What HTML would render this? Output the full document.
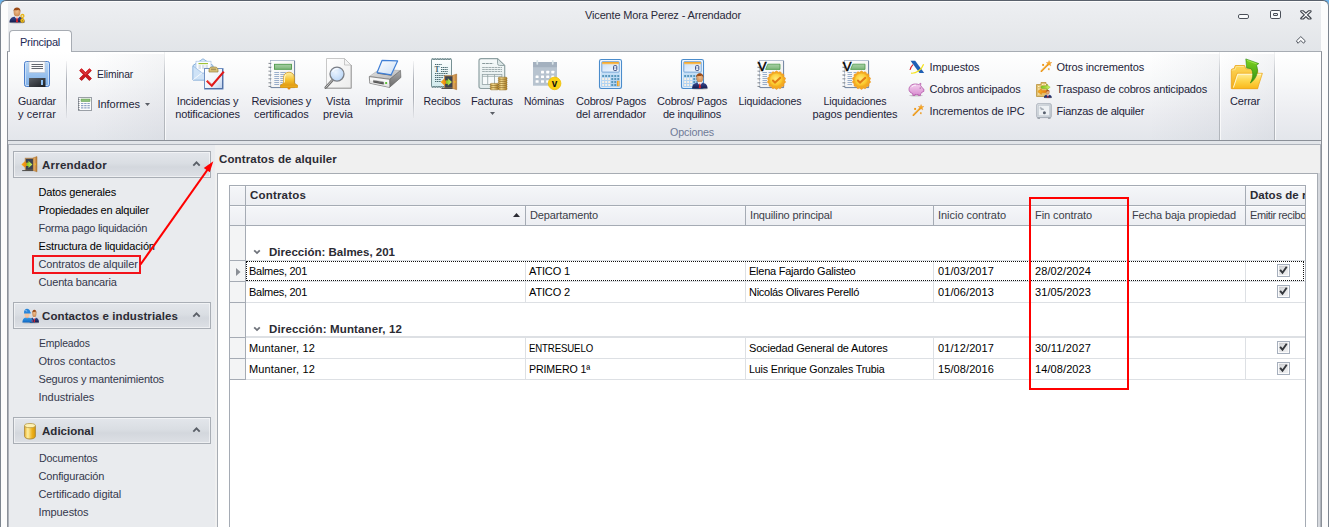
<!DOCTYPE html>
<html lang="es"><head><meta charset="utf-8"><title>Vicente Mora Perez - Arrendador</title>
<style>
html,body{margin:0;padding:0;background:#fff;}
body{width:1329px;height:527px;overflow:hidden;position:relative;font-family:"Liberation Sans", sans-serif;font-size:11px;}
#w{position:absolute;left:0;top:0;width:1329px;height:527px;overflow:hidden;background:#e9ebee;}
#w div,#w span,#w svg{box-sizing:border-box;}
svg{position:absolute;overflow:visible;}
</style></head><body><div id="w">
<div style="position:absolute;left:0px;top:0px;width:8px;height:8px;background:#6db3ea;"></div>
<div style="position:absolute;left:1321px;top:0px;width:8px;height:8px;background:#6db3ea;"></div>
<div style="position:absolute;left:0px;top:0px;width:1329px;height:560px;border:1px solid #7d858f;border-top-color:#59616c;border-radius:6px 6px 0 0;background:#fcfcfc;"></div>
<div style="position:absolute;left:8px;top:2px;width:1313px;height:49px;background:linear-gradient(#edeff2,#e8eaed 50%,#e2e5e9);"></div>
<div style="position:absolute;left:8px;top:51px;width:1313px;height:500px;background:#e9ebee;"></div>
<div style="position:absolute;left:7px;top:51px;width:1315px;height:500px;border-left:1px solid #8b9098;border-right:1px solid #8b9098;background:#e2e5e9;"></div>
<div style="position:absolute;left:7px;top:51px;width:1315px;height:90px;border:1px solid #8b9098;border-top-color:#a7acb3;background:linear-gradient(#ffffff 0%,#f8f9fa 30%,#ecedf1 70%,#e3e6eb 100%);"></div>
<div style="position:absolute;left:9px;top:30px;width:63px;height:22px;border:1px solid #a7acb3;border-bottom:none;border-radius:4px 4px 0 0;background:#ffffff;"></div>
<div style="position:absolute;left:94px;top:54px;width:70px;height:86px;background:linear-gradient(to right,rgba(120,130,150,0),rgba(120,130,150,0.075));"></div>
<div style="position:absolute;left:1149px;top:54px;width:70px;height:86px;background:linear-gradient(to right,rgba(120,130,150,0),rgba(120,130,150,0.075));"></div>
<div style="position:absolute;left:1221px;top:54px;width:53px;height:86px;background:linear-gradient(to right,rgba(120,130,150,0),rgba(120,130,150,0.075));"></div>
<div style="position:absolute;left:164px;top:52px;width:1px;height:88px;background:linear-gradient(rgba(190,194,200,0.2),#b9bdc3 30%,#b1b5bb);"></div>
<div style="position:absolute;left:165px;top:52px;width:1px;height:88px;background:rgba(255,255,255,0.7);"></div>
<div style="position:absolute;left:1219px;top:52px;width:1px;height:88px;background:linear-gradient(rgba(190,194,200,0.2),#b9bdc3 30%,#b1b5bb);"></div>
<div style="position:absolute;left:1220px;top:52px;width:1px;height:88px;background:rgba(255,255,255,0.7);"></div>
<div style="position:absolute;left:1274px;top:52px;width:1px;height:88px;background:linear-gradient(rgba(190,194,200,0.2),#b9bdc3 30%,#b1b5bb);"></div>
<div style="position:absolute;left:1275px;top:52px;width:1px;height:88px;background:rgba(255,255,255,0.7);"></div>
<div style="position:absolute;left:66px;top:61px;width:1px;height:57px;background:linear-gradient(rgba(170,174,182,0.1),#a9adb5 35%,#a9adb5 65%,rgba(170,174,182,0.1));"></div>
<div style="position:absolute;left:67px;top:61px;width:1px;height:57px;background:linear-gradient(rgba(255,255,255,0),rgba(255,255,255,0.8) 50%,rgba(255,255,255,0));"></div>
<div style="position:absolute;left:413px;top:61px;width:1px;height:57px;background:linear-gradient(rgba(170,174,182,0.1),#a9adb5 35%,#a9adb5 65%,rgba(170,174,182,0.1));"></div>
<div style="position:absolute;left:414px;top:61px;width:1px;height:57px;background:linear-gradient(rgba(255,255,255,0),rgba(255,255,255,0.8) 50%,rgba(255,255,255,0));"></div>
<div style="position:absolute;left:8px;top:144px;width:1313px;height:400px;border:1px solid #adb2ba;background:#e9ebee;"></div>
<div style="position:absolute;left:215px;top:145px;width:1105px;height:400px;background:#f0f0f0;"></div>
<div style="position:absolute;left:1318px;top:173px;width:2px;height:400px;background:#d6d9de;"></div>
<div style="position:absolute;left:217px;top:173px;width:1101px;height:400px;border:1px solid #a7acb3;background:#ffffff;"></div>
<div style="position:absolute;left:13px;top:151px;width:198px;height:27px;border:1px solid #a9aeb5;background:linear-gradient(#e3e6eb 0%,#dadee3 45%,#d3d7dd 60%,#dde0e5 100%);box-shadow:inset 0 0 0 1px rgba(255,255,255,0.5);"></div>
<svg style="left:192px;top:160px" width="9" height="7" viewBox="0 0 9 7"><path d="M1.300 5.600 L4.500 2.400 L7.700 5.600" fill="none" stroke="#5a5f67" stroke-width="1.900"/></svg>
<div style="position:absolute;left:13px;top:302px;width:198px;height:27px;border:1px solid #a9aeb5;background:linear-gradient(#e3e6eb 0%,#dadee3 45%,#d3d7dd 60%,#dde0e5 100%);box-shadow:inset 0 0 0 1px rgba(255,255,255,0.5);"></div>
<svg style="left:192px;top:311px" width="9" height="7" viewBox="0 0 9 7"><path d="M1.300 5.600 L4.500 2.400 L7.700 5.600" fill="none" stroke="#5a5f67" stroke-width="1.900"/></svg>
<div style="position:absolute;left:13px;top:417px;width:198px;height:27px;border:1px solid #a9aeb5;background:linear-gradient(#e3e6eb 0%,#dadee3 45%,#d3d7dd 60%,#dde0e5 100%);box-shadow:inset 0 0 0 1px rgba(255,255,255,0.5);"></div>
<svg style="left:192px;top:426px" width="9" height="7" viewBox="0 0 9 7"><path d="M1.300 5.600 L4.500 2.400 L7.700 5.600" fill="none" stroke="#5a5f67" stroke-width="1.900"/></svg>
<div style="position:absolute;left:229px;top:185px;width:1077px;height:400px;border:1px solid #a5abb4;border-bottom:none;background:#fff;"></div>
<div style="position:absolute;left:230px;top:186px;width:1075px;height:19px;background:linear-gradient(#f5f6f9,#eceef2);box-shadow:inset 0 1px 0 rgba(255,255,255,0.7);"></div>
<div style="position:absolute;left:230px;top:206px;width:1075px;height:19px;background:linear-gradient(#f5f6f9,#eceef2);box-shadow:inset 0 1px 0 rgba(255,255,255,0.7);"></div>
<div style="position:absolute;left:230px;top:205px;width:1075px;height:1px;background:#a5abb4;"></div>
<div style="position:absolute;left:230px;top:225px;width:1075px;height:1px;background:#a5abb4;"></div>
<div style="position:absolute;left:230px;top:226px;width:15px;height:400px;background:#f3f4f5;"></div>
<div style="position:absolute;left:245px;top:186px;width:1px;height:400px;background:#a5abb4;"></div>
<div style="position:absolute;left:1245px;top:186px;width:1px;height:40px;background:#a5abb4;"></div>
<div style="position:absolute;left:525px;top:206px;width:1px;height:20px;background:#a5abb4;"></div>
<div style="position:absolute;left:745px;top:206px;width:1px;height:20px;background:#a5abb4;"></div>
<div style="position:absolute;left:933px;top:206px;width:1px;height:20px;background:#a5abb4;"></div>
<div style="position:absolute;left:1030px;top:206px;width:1px;height:20px;background:#a5abb4;"></div>
<div style="position:absolute;left:1127px;top:206px;width:1px;height:20px;background:#a5abb4;"></div>
<svg style="left:513px;top:213px" width="7" height="4" viewBox="0 0 7 4"><path d="M0 4 L3.5 0 L7 4Z" fill="#2b2b33"/></svg>
<div style="position:absolute;left:246px;top:260px;width:1059px;height:1px;background:#dde0e4;"></div>
<div style="position:absolute;left:230px;top:260px;width:15px;height:1px;background:#a5abb4;"></div>
<svg style="left:253px;top:249px" width="8" height="6" viewBox="0 0 8 6"><path d="M1.200 1.300 L4 4.100 L6.800 1.300" fill="none" stroke="#6e727a" stroke-width="1.800"/></svg>
<div style="position:absolute;left:246px;top:281px;width:1059px;height:1px;background:#dde0e4;"></div>
<div style="position:absolute;left:230px;top:281px;width:15px;height:1px;background:#a5abb4;"></div>
<div style="position:absolute;left:525px;top:261px;width:1px;height:20px;background:#dde0e4;"></div>
<div style="position:absolute;left:745px;top:261px;width:1px;height:20px;background:#dde0e4;"></div>
<div style="position:absolute;left:933px;top:261px;width:1px;height:20px;background:#dde0e4;"></div>
<div style="position:absolute;left:1030px;top:261px;width:1px;height:20px;background:#dde0e4;"></div>
<div style="position:absolute;left:1127px;top:261px;width:1px;height:20px;background:#dde0e4;"></div>
<div style="position:absolute;left:1245px;top:261px;width:1px;height:20px;background:#dde0e4;"></div>
<svg style="left:1277px;top:264px" width="13" height="13" viewBox="0 0 13 13"><rect x="0.500" y="0.500" width="12" height="12" fill="#fbfbfc" stroke="#a6afbc"/><rect x="2" y="2" width="9" height="9" fill="url(#gChk)"/><path d="M2.200 2.200H10.800" stroke="#c3c5c9" stroke-width="0.600"/><path d="M3.100 5.800 L5.500 8.700 L9.700 2.700" fill="none" stroke="#34373c" stroke-width="1.900"/></svg>
<div style="position:absolute;left:246px;top:261px;width:1058px;height:20px;border:1px dotted #111;"></div>
<svg style="left:236px;top:268px" width="5" height="8" viewBox="0 0 5 8"><path d="M0 0 L4.500 4 L0 8Z" fill="#8a8e95"/></svg>
<div style="position:absolute;left:246px;top:302px;width:1059px;height:1px;background:#dde0e4;"></div>
<div style="position:absolute;left:230px;top:302px;width:15px;height:1px;background:#a5abb4;"></div>
<div style="position:absolute;left:525px;top:282px;width:1px;height:20px;background:#dde0e4;"></div>
<div style="position:absolute;left:745px;top:282px;width:1px;height:20px;background:#dde0e4;"></div>
<div style="position:absolute;left:933px;top:282px;width:1px;height:20px;background:#dde0e4;"></div>
<div style="position:absolute;left:1030px;top:282px;width:1px;height:20px;background:#dde0e4;"></div>
<div style="position:absolute;left:1127px;top:282px;width:1px;height:20px;background:#dde0e4;"></div>
<div style="position:absolute;left:1245px;top:282px;width:1px;height:20px;background:#dde0e4;"></div>
<svg style="left:1277px;top:285px" width="13" height="13" viewBox="0 0 13 13"><rect x="0.500" y="0.500" width="12" height="12" fill="#fbfbfc" stroke="#a6afbc"/><rect x="2" y="2" width="9" height="9" fill="url(#gChk)"/><path d="M2.200 2.200H10.800" stroke="#c3c5c9" stroke-width="0.600"/><path d="M3.100 5.800 L5.500 8.700 L9.700 2.700" fill="none" stroke="#34373c" stroke-width="1.900"/></svg>
<div style="position:absolute;left:246px;top:336px;width:1059px;height:2px;background:#dde0e4;"></div>
<div style="position:absolute;left:230px;top:337px;width:15px;height:1px;background:#a5abb4;"></div>
<svg style="left:253px;top:326px" width="8" height="6" viewBox="0 0 8 6"><path d="M1.200 1.300 L4 4.100 L6.800 1.300" fill="none" stroke="#6e727a" stroke-width="1.800"/></svg>
<div style="position:absolute;left:246px;top:358px;width:1059px;height:1px;background:#dde0e4;"></div>
<div style="position:absolute;left:230px;top:358px;width:15px;height:1px;background:#a5abb4;"></div>
<div style="position:absolute;left:525px;top:338px;width:1px;height:20px;background:#dde0e4;"></div>
<div style="position:absolute;left:745px;top:338px;width:1px;height:20px;background:#dde0e4;"></div>
<div style="position:absolute;left:933px;top:338px;width:1px;height:20px;background:#dde0e4;"></div>
<div style="position:absolute;left:1030px;top:338px;width:1px;height:20px;background:#dde0e4;"></div>
<div style="position:absolute;left:1127px;top:338px;width:1px;height:20px;background:#dde0e4;"></div>
<div style="position:absolute;left:1245px;top:338px;width:1px;height:20px;background:#dde0e4;"></div>
<svg style="left:1277px;top:341px" width="13" height="13" viewBox="0 0 13 13"><rect x="0.500" y="0.500" width="12" height="12" fill="#fbfbfc" stroke="#a6afbc"/><rect x="2" y="2" width="9" height="9" fill="url(#gChk)"/><path d="M2.200 2.200H10.800" stroke="#c3c5c9" stroke-width="0.600"/><path d="M3.100 5.800 L5.500 8.700 L9.700 2.700" fill="none" stroke="#34373c" stroke-width="1.900"/></svg>
<div style="position:absolute;left:246px;top:379px;width:1059px;height:1px;background:#dde0e4;"></div>
<div style="position:absolute;left:230px;top:379px;width:15px;height:1px;background:#a5abb4;"></div>
<div style="position:absolute;left:525px;top:359px;width:1px;height:20px;background:#dde0e4;"></div>
<div style="position:absolute;left:745px;top:359px;width:1px;height:20px;background:#dde0e4;"></div>
<div style="position:absolute;left:933px;top:359px;width:1px;height:20px;background:#dde0e4;"></div>
<div style="position:absolute;left:1030px;top:359px;width:1px;height:20px;background:#dde0e4;"></div>
<div style="position:absolute;left:1127px;top:359px;width:1px;height:20px;background:#dde0e4;"></div>
<div style="position:absolute;left:1245px;top:359px;width:1px;height:20px;background:#dde0e4;"></div>
<svg style="left:1277px;top:362px" width="13" height="13" viewBox="0 0 13 13"><rect x="0.500" y="0.500" width="12" height="12" fill="#fbfbfc" stroke="#a6afbc"/><rect x="2" y="2" width="9" height="9" fill="url(#gChk)"/><path d="M2.200 2.200H10.800" stroke="#c3c5c9" stroke-width="0.600"/><path d="M3.100 5.800 L5.500 8.700 L9.700 2.700" fill="none" stroke="#34373c" stroke-width="1.900"/></svg>
<div style="position:absolute;left:230px;top:380px;width:16px;height:200px;background:#fff;"></div>
<svg style="left:0;top:0" width="0" height="0"><defs>
<linearGradient id="gFl" x1="0" y1="0" x2="0" y2="1"><stop offset="0" stop-color="#b9d7f5"/><stop offset="1" stop-color="#7eaee6"/></linearGradient>
<linearGradient id="gDk" x1="0" y1="0" x2="1" y2="1"><stop offset="0" stop-color="#5a5f66"/><stop offset="1" stop-color="#1c1e22"/></linearGradient>
<linearGradient id="gEnv" x1="0" y1="0" x2="0" y2="1"><stop offset="0" stop-color="#e3f0fb"/><stop offset="1" stop-color="#a9cdee"/></linearGradient>
<linearGradient id="gClip" x1="0" y1="0" x2="1" y2="1"><stop offset="0" stop-color="#ffffff"/><stop offset="0.6" stop-color="#eef3fb"/><stop offset="1" stop-color="#b9cdea"/></linearGradient>
<linearGradient id="gGold" x1="0" y1="0" x2="0" y2="1"><stop offset="0" stop-color="#fdf0a8"/><stop offset="0.5" stop-color="#f6c332"/><stop offset="1" stop-color="#d98e08"/></linearGradient>
<linearGradient id="gGoldH" x1="0" y1="0" x2="1" y2="0"><stop offset="0" stop-color="#f0b830"/><stop offset="0.3" stop-color="#fdeea0"/><stop offset="0.7" stop-color="#eeb01a"/><stop offset="1" stop-color="#d89a0c"/></linearGradient>
<linearGradient id="gGreen" x1="0" y1="0" x2="0" y2="1"><stop offset="0" stop-color="#a7cfa4"/><stop offset="1" stop-color="#7db77a"/></linearGradient>
<linearGradient id="gPage" x1="0" y1="0" x2="1" y2="1"><stop offset="0" stop-color="#ffffff"/><stop offset="1" stop-color="#ececec"/></linearGradient>
<radialGradient id="gLens" cx="0.4" cy="0.35" r="0.7"><stop offset="0" stop-color="#eaf3fe"/><stop offset="1" stop-color="#b7d4f6"/></radialGradient>
<linearGradient id="gPaper" x1="0" y1="0" x2="1" y2="1"><stop offset="0" stop-color="#ffffff"/><stop offset="1" stop-color="#c8ddf5"/></linearGradient>
<linearGradient id="gPrTop" x1="0" y1="0" x2="1" y2="1"><stop offset="0" stop-color="#e4e4e4"/><stop offset="1" stop-color="#b4b4b4"/></linearGradient>
<linearGradient id="gPrSide" x1="0" y1="0" x2="0" y2="1"><stop offset="0" stop-color="#a8a8a8"/><stop offset="1" stop-color="#6a6a6a"/></linearGradient>
<linearGradient id="gRcpt" x1="0" y1="0" x2="0" y2="1"><stop offset="0" stop-color="#ffffff"/><stop offset="1" stop-color="#cfe9ec"/></linearGradient>
<linearGradient id="gDoor" x1="0" y1="0" x2="1" y2="0"><stop offset="0" stop-color="#e9b877"/><stop offset="1" stop-color="#b9772c"/></linearGradient>
<linearGradient id="gArrO" x1="0" y1="0" x2="1" y2="0"><stop offset="0" stop-color="#f7b21c"/><stop offset="1" stop-color="#e8740c"/></linearGradient>
<linearGradient id="gArrG" x1="0" y1="0" x2="1" y2="0"><stop offset="0" stop-color="#7cc41c"/><stop offset="1" stop-color="#d3f06a"/></linearGradient>
<linearGradient id="gFac" x1="0" y1="0" x2="0" y2="1"><stop offset="0" stop-color="#f6fafa"/><stop offset="1" stop-color="#dfeaea"/></linearGradient>
<linearGradient id="gCoin" x1="0" y1="0" x2="1" y2="0"><stop offset="0" stop-color="#b8872a"/><stop offset="0.35" stop-color="#f3dc93"/><stop offset="1" stop-color="#a9781e"/></linearGradient>
<linearGradient id="gCalc" x1="0" y1="0" x2="0" y2="1"><stop offset="0" stop-color="#e3effb"/><stop offset="1" stop-color="#a5cdf0"/></linearGradient>
<linearGradient id="gDisp" x1="0" y1="0" x2="1" y2="1"><stop offset="0" stop-color="#c9def6"/><stop offset="1" stop-color="#f6faff"/></linearGradient>
<linearGradient id="gOr" x1="0" y1="0" x2="1" y2="0"><stop offset="0" stop-color="#f39a12"/><stop offset="1" stop-color="#fbd27c"/></linearGradient>
<radialGradient id="gSeal" cx="0.45" cy="0.4" r="0.6"><stop offset="0" stop-color="#ffe978"/><stop offset="0.7" stop-color="#fbc92e"/><stop offset="1" stop-color="#f1a21a"/></radialGradient>
<radialGradient id="gFace" cx="0.5" cy="0.4" r="0.6"><stop offset="0" stop-color="#f0bd8c"/><stop offset="1" stop-color="#c98850"/></radialGradient>
<linearGradient id="gSuit" x1="0" y1="0" x2="0" y2="1"><stop offset="0" stop-color="#3a4d96"/><stop offset="1" stop-color="#141c4c"/></linearGradient>
<linearGradient id="gFold" x1="0" y1="0" x2="0" y2="1"><stop offset="0" stop-color="#ffef9c"/><stop offset="0.5" stop-color="#fdd448"/><stop offset="1" stop-color="#f9b81c"/></linearGradient>
<linearGradient id="gFoldB" x1="0" y1="0" x2="0" y2="1"><stop offset="0" stop-color="#fdd85c"/><stop offset="1" stop-color="#f3ac18"/></linearGradient>
<linearGradient id="gGrn2" x1="0" y1="0" x2="0" y2="1"><stop offset="0" stop-color="#7ed321"/><stop offset="1" stop-color="#2f8f12"/></linearGradient>
<linearGradient id="gRedX" x1="0" y1="0" x2="0" y2="1"><stop offset="0" stop-color="#e0343a"/><stop offset="1" stop-color="#a80d12"/></linearGradient>
<linearGradient id="gPig" x1="0" y1="0" x2="0" y2="1"><stop offset="0" stop-color="#f6d3f0"/><stop offset="1" stop-color="#d88cd0"/></linearGradient>
<linearGradient id="gSafe" x1="0" y1="0" x2="1" y2="1"><stop offset="0" stop-color="#eef1f4"/><stop offset="1" stop-color="#c3cad2"/></linearGradient>
<linearGradient id="gBlueS" x1="0" y1="0" x2="0" y2="1"><stop offset="0" stop-color="#3aa0ea"/><stop offset="1" stop-color="#0e64c0"/></linearGradient>
<linearGradient id="gChk" x1="0" y1="0" x2="1" y2="1"><stop offset="0" stop-color="#d3d5d8"/><stop offset="1" stop-color="#f1f1f2"/></linearGradient>
</defs></svg>
<svg style="left:9px;top:7px" width="16" height="16" viewBox="0 0 16 16"><ellipse cx="8" cy="15.600" rx="7.600" ry="1" fill="#000" fill-opacity="0.180"/><path d="M0.500 15.400c0-3.600 2-5 4.600-5.600L8 9.400l2.900.4c2.600.6 4.600 2 4.600 5.600Z" fill="url(#gSuit)"/><path d="M5.600 9.600L8 12.800 10.400 9.600 8 8.800Z" fill="#ffffff"/><path d="M7.500 10.600h1l.6 4.600H6.900Z" fill="#d81e28"/><ellipse cx="8" cy="5.400" rx="3.300" ry="4" fill="url(#gFace)"/><path d="M4.500 5.200C4.200 2 6 0.600 8 0.600s3.800 1.400 3.500 4.600c-.4-1.600-1.200-2.200-1.800-2.400-1 .6-2.600.6-3.800.2-.8.400-1.200 1.200-1.400 2.200Z" fill="#9a4a16"/><circle cx="13.400" cy="9" r="1.500" fill="none" stroke="#e8b418" stroke-width="1.300"/><path d="M13.400 10.400V12.600" stroke="#e8b418" stroke-width="1.200"/><ellipse cx="13.400" cy="13.600" rx="1.900" ry="2.100" fill="#f2c21c" stroke="#c8900c" stroke-width="0.500"/><circle cx="13.400" cy="13.800" r="0.600" fill="#8a6a1a"/></svg>
<svg style="left:21px;top:58px" width="32" height="32" viewBox="0 0 32 32"><rect x="3.5" y="3.5" width="25" height="25" rx="2" fill="url(#gFl)" stroke="#4d7fcb"/><rect x="4.5" y="4.5" width="23" height="23" rx="1.2" fill="none" stroke="#d4e6fa" stroke-opacity="0.8"/><rect x="8" y="3.5" width="16" height="11" fill="#fafafa" stroke="#b9c4d2" stroke-width="0.6"/><rect x="8" y="3" width="16" height="1" fill="#8f98a5"/><path d="M10.5 6.5H22M10.5 8.5H22M10.5 10.5H22" stroke="#4f545c" stroke-width="0.9"/><rect x="8" y="20" width="16.5" height="9" fill="url(#gDk)"/><rect x="20" y="22" width="2" height="5" fill="#8fc0f2"/></svg>
<svg style="left:77.7px;top:66.5px" width="15" height="15" viewBox="0 0 16 16"><path d="M3 13.6L13 3.6M3 3.6L13 13.6" stroke="#7a7a7a" stroke-opacity="0.25" stroke-width="3.6"/><path d="M2.6 2.6L13.4 13.4M13.4 2.6L2.6 13.4" stroke="url(#gRedX)" stroke-width="3.4"/><path d="M2.6 2.6L13.4 13.4M13.4 2.6L2.6 13.4" stroke="#c81a20" stroke-width="3.2"/><path d="M3 2.8L8 7.6 13 2.8" stroke="#e8484c" stroke-width="1.2" fill="none" stroke-opacity="0.7"/></svg>
<svg style="left:77px;top:96px" width="16" height="16" viewBox="0 0 16 16"><rect x="1.5" y="1.5" width="13" height="13" fill="#fcfcfc" stroke="#9a9fa6"/><path d="M1 3.5h1.6M1 5.5h1.6M1 7.5h1.6M1 9.5h1.6M1 11.5h1.6M1 13.5h1.6" stroke="#6f747c" stroke-width="0.8"/><rect x="4" y="3" width="9" height="2.6" fill="#8dc07a" stroke="#5f9a4c" stroke-width="0.5"/><path d="M4 7.5h2.4M7.2 7.5h2.4M10.4 7.5h2.4M4 9.7h2.4M7.2 9.7h2.4M10.4 9.7h2.4M4 11.9h2.4M7.2 11.9h2.4M10.4 11.9h2.4" stroke="#8fa3c4" stroke-width="1.2"/></svg>
<svg style="left:145px;top:103px" width="5" height="3" viewBox="0 0 5 3"><path d="M0 0H5L2.500 3Z" fill="#5a5e66"/></svg>
<svg style="left:192px;top:58px" width="32" height="32" viewBox="0 0 32 32"><path d="M1 7.5L11 0.8 21 7.5V22H1Z" fill="url(#gEnv)" stroke="#7fa9d6" stroke-width="0.9"/><rect x="4" y="3.2" width="15" height="12" fill="#fbfdff" stroke="#9dbde0" stroke-width="0.6"/><path d="M6.5 5.6H16" stroke="#9bbf2e" stroke-width="1.1"/><path d="M6.5 8h2.4M10 8h2.4M13.5 8h2.4M6.5 10h2.4M10 10h2.4M13.5 10h2.4" stroke="#b9c6d6" stroke-width="1"/><path d="M1 8L11 15.5 21 8V22H1Z" fill="#cfe3f7" stroke="#8fb5de" stroke-width="0.7"/><path d="M1.3 21.7L10 14.8" stroke="#ffffff" stroke-width="0.9" stroke-opacity="0.9"/><rect x="12.5" y="10.5" width="18.5" height="20.5" fill="url(#gClip)" stroke="#6f8fc2" stroke-width="1"/><path d="M30.6 11V30.6H13" stroke="#4a6aa0" stroke-width="1" fill="none"/><path d="M17 14V12c0-1.8 1.4-3 3-3h3c1.6 0 3 1.2 3 3v2Z" fill="#d9c27a" stroke="#9a8444" stroke-width="0.7"/><rect x="19" y="10.6" width="5" height="1.6" fill="#a8935a"/><path d="M14.8 22.8L19.8 27.6 31.8 13.6" fill="none" stroke="#e01818" stroke-width="2.2"/><path d="M15 22.4L19.6 26.4" fill="none" stroke="#f26a5a" stroke-width="0.9"/></svg>
<svg style="left:265px;top:58px" width="34" height="32" viewBox="0 0 34 32"><rect x="5.500" y="2.500" width="24" height="27" fill="url(#gPage)" stroke="#a3b2c8" stroke-width="0.800"/><path d="M29.600 3V29.600H6" stroke="#6c7f9c" stroke-width="0.900" fill="none"/><path d="M3.500 5.200h2.800M3.500 9.100h2.800M3.500 13h2.800M3.500 16.900h2.800M3.500 20.800h2.800M3.500 24.700h2.800M3.500 28.200h2.800" stroke="#6a7078" stroke-width="1.100"/><path d="M3.300 4.300h2.400M3.300 8.200h2.400M3.300 12.100h2.400M3.300 16h2.400M3.300 19.900h2.400M3.300 23.800h2.400M3.300 27.300h2.400" stroke="#ffffff" stroke-width="0.800"/><rect x="9.5" y="6.3" width="17" height="5" fill="url(#gGreen)" stroke="#4f9a4c" stroke-width="0.9"/><path d="M9.3 14.5h4.8M9.3 16.5h4.8M9.3 18.5h4.8M9.3 20.5h4.8M9.3 22.5h4.8M9.3 24.5h4.8M9.3 26.5h4.8M15.3 14.5h5.5M15.3 16.5h4M15.3 18.5h3.5M15.3 20.5h3.5M15.3 22.5h3M15.3 24.5h2.5M15.3 26.5h2" stroke="#8fa6c6" stroke-width="0.9"/><path d="M24 14.2c-3.2 0-5.4 2.4-5.4 5.6v4.6c0 1.2-1.6 2-3 2.6v2.4h16.8v-2.4c-1.4-.6-3-1.400-3-2.600v-4.600c0-3.200-2.200-5.600-5.400-5.600Z" fill="url(#gGold)" stroke="#c98a10" stroke-width="0.7"/><path d="M15.600 27.400h16.800v2h-16.800Z" fill="#e9a81a"/><path d="M21 16.500c-1.200.8-1.600 2.400-1.600 4v4" stroke="#fff7c8" stroke-width="1.200" fill="none" stroke-opacity="0.9"/><ellipse cx="24" cy="30.500" rx="1.500" ry="1.100" fill="#e88a10"/></svg>
<svg style="left:322px;top:58px" width="32" height="32" viewBox="0 0 32 32"><path d="M4.500 0.500H22.500L29 7V30H4.500Z" fill="url(#gPage)" stroke="#c2c2c2" stroke-width="0.9"/><path d="M29.300 7V30.300H5" stroke="#9a9a9a" stroke-width="0.9" fill="none"/><path d="M22.500 0.500V7H29Z" fill="#f4f4f4" stroke="#bdbdbd" stroke-width="0.8"/><path d="M10.300 22.300L3.700 29.700" stroke="#6f6f6f" stroke-width="2.600" stroke-linecap="round"/><path d="M10.300 22.100L3.900 29.300" stroke="#c9c9c9" stroke-width="1" stroke-linecap="round"/><circle cx="15" cy="16.100" r="7" fill="url(#gLens)" stroke="#7b7f86" stroke-width="1.300"/><path d="M10.500 14c1-2.400 3.600-3.600 6-3.200" stroke="#ffffff" stroke-width="1.200" fill="none" stroke-opacity="0.8"/></svg>
<svg style="left:368px;top:58px" width="34" height="32" viewBox="0 0 34 32"><path d="M1.400 18.400L11.600 11.300 32.400 12.500 21.700 21.200Z" fill="url(#gPrTop)" stroke="#9c9c9c" stroke-width="0.500" stroke-linejoin="round"/><path d="M21.700 21.300L32.500 12.500 32.900 19.500 21.500 29.400Z" fill="url(#gPrSide)" stroke="#5c5c5c" stroke-width="0.600" stroke-linejoin="round"/><path d="M1.300 18.600L21.700 21.300 21.500 29.400 1.700 25.200Z" fill="#f8f8f8" stroke="#5e5e5e" stroke-width="0.700" stroke-linejoin="round"/><path d="M1.600 22.600L21.600 25.800V29.300L1.700 25.100Z" fill="#dcdcdc" fill-opacity="0.600"/><path d="M9.500 15L23.500 17.100" stroke="#6a6a6a" stroke-width="1.300"/><path d="M14.100 2.300L29.600 2.900 23.200 16.800 9.100 14.600Z" fill="url(#gPaper)" stroke="#3f7fd6" stroke-width="1.200" stroke-linejoin="round"/><path d="M5.300 22.200L15.700 23.900 15.700 26.500 5.300 24.500Z" fill="#444"/><path d="M5.300 22.200L15.700 23.900" stroke="#a8a8a8" stroke-width="0.600"/><path d="M6.200 23.600L15 25.100" stroke="#888" stroke-width="0.600"/><rect x="17.200" y="24" width="1.900" height="2" fill="#5fc43a"/></svg>
<svg style="left:425px;top:58px" width="34" height="32" viewBox="0 0 34 32"><path d="M6.500 2L7.33 0.3L8.17 2L9.00 0.3L9.83 2L10.67 0.3L11.50 2L12.33 0.3L13.17 2L14.00 0.3L14.83 2L15.67 0.3L16.50 2L17.33 0.3L18.17 2L19.00 0.3L19.83 2L20.67 0.3L21.50 2L22.33 0.3L23.17 2L24.00 0.3L24.83 2L25.67 0.3L26.50 2V28.100L25.67 29.700L24.83 28L24.00 29.700L23.17 28L22.33 29.700L21.50 28L20.67 29.700L19.83 28L19.00 29.700L18.17 28L17.33 29.700L16.50 28L15.67 29.700L14.83 28L14.00 29.700L13.17 28L12.33 29.700L11.50 28L10.67 29.700L9.83 28L9.00 29.700L8.17 28L7.33 29.700L6.50 28Z" fill="url(#gRcpt)" stroke="#557578" stroke-width="0.800"/><path d="M10 6.500H17" stroke="#4a6a70" stroke-width="1" stroke-dasharray="1.300 0.500"/><path d="M16 9.500H23M16 11.500H23M16 13.500H23M10 15.500H23M10 17.500H20M10 19.500H18M10 21.500H16M10 23.500H16" stroke="#4a6a70" stroke-width="1" stroke-dasharray="1.300 0.500"/><text x="9.400" y="13.800" font-family="Liberation Serif, serif" font-size="7.500" font-weight="700" fill="#3f6068">T</text><g transform="translate(15.2,15.4) scale(1.03)"><rect x="4.300" y="2.300" width="8.200" height="12" fill="#3b4250" stroke="#b98a52" stroke-width="1"/><path d="M12.300 1.800L16 0.600V15.800L12.300 14.600Z" fill="url(#gDoor)" stroke="#a8702c" stroke-width="0.5"/><rect x="13.700" y="7.400" width="1" height="1.800" fill="#f7c21a"/><path d="M1.200 14.600H12" stroke="#4a4a4a" stroke-width="1"/><path d="M0.400 8.400L4.400 4.800V6.800H7V10H4.400V12Z" fill="url(#gArrO)"/><path d="M11.400 8.400L7.400 4.800V6.800H5.600V10H7.400V12Z" fill="url(#gArrG)"/></g></svg>
<svg style="left:476px;top:58px" width="32" height="32" viewBox="0 0 32 32"><path d="M5 0.700H21.500L28.700 7.500V28.500a2 2 0 0 1-2 2H5a2 2 0 0 1-2-2V2.700a2 2 0 0 1 2-2Z" fill="url(#gFac)" stroke="#8ea0a2" stroke-width="1.200"/><path d="M21.500 0.700V5.500a2 2 0 0 0 2 2H28.700Z" fill="#dbe6e6" stroke="#8ea0a2" stroke-width="0.9"/><path d="M6.200 5.500H17.200" stroke="#8a9a9c" stroke-width="1" stroke-dasharray="3 0.600"/><path d="M6.200 9.500H26M6.200 11.500H26M6.200 13.500H26" stroke="#97a6a8" stroke-width="0.9" stroke-dasharray="2.600 0.500"/><rect x="6.300" y="16.400" width="19.600" height="10" fill="#f7fbfb" stroke="#93a3a5" stroke-width="0.8"/><path d="M6.300 18.300H25.900M11.700 16.400V26.400M18.500 16.400V26.400" stroke="#93a3a5" stroke-width="0.8"/><rect x="22.3" y="19.2" width="8.8" height="2.200" rx="1.100" fill="url(#gCoin)" stroke="#8a6414" stroke-width="0.500"/><rect x="22.3" y="21.3" width="8.8" height="2.200" rx="1.100" fill="url(#gCoin)" stroke="#8a6414" stroke-width="0.500"/><rect x="22.3" y="23.4" width="8.8" height="2.200" rx="1.100" fill="url(#gCoin)" stroke="#8a6414" stroke-width="0.500"/><rect x="22.3" y="25.5" width="8.8" height="2.200" rx="1.100" fill="url(#gCoin)" stroke="#8a6414" stroke-width="0.500"/><rect x="22.3" y="27.6" width="8.8" height="2.200" rx="1.100" fill="url(#gCoin)" stroke="#8a6414" stroke-width="0.500"/><rect x="22.3" y="29.7" width="8.8" height="2.200" rx="1.100" fill="url(#gCoin)" stroke="#8a6414" stroke-width="0.500"/><rect x="14.2" y="25.4" width="8.2" height="2.200" rx="1.100" fill="url(#gCoin)" stroke="#8a6414" stroke-width="0.500"/><rect x="14.2" y="27.5" width="8.2" height="2.200" rx="1.100" fill="url(#gCoin)" stroke="#8a6414" stroke-width="0.500"/><rect x="14.2" y="29.6" width="8.2" height="2.200" rx="1.100" fill="url(#gCoin)" stroke="#8a6414" stroke-width="0.500"/></svg>
<svg style="left:490px;top:112px" width="5" height="3" viewBox="0 0 5 3"><path d="M0 0H5L2.500 3Z" fill="#5a5e66"/></svg>
<svg style="left:528px;top:58px" width="34" height="34" viewBox="0 0 34 34"><rect x="5" y="4" width="24" height="23.700" fill="#b7c3cf"/><rect x="5" y="4" width="24" height="5.200" fill="#a4b1bf"/><rect x="8.400" y="2" width="1.700" height="4.800" rx="0.800" fill="#dbe6ea"/><rect x="23.900" y="2" width="1.700" height="4.800" rx="0.800" fill="#dbe6ea"/><rect x="13" y="12.8" width="3" height="2.600" rx="0.400" fill="#ffffff"/><rect x="18.2" y="12.8" width="3" height="2.600" rx="0.400" fill="#ffffff"/><rect x="23.3" y="12.8" width="3" height="2.600" rx="0.400" fill="#ffffff"/><rect x="7.6" y="17.5" width="3" height="2.600" rx="0.400" fill="#ffffff"/><rect x="13" y="17.5" width="3" height="2.600" rx="0.400" fill="#ffffff"/><rect x="18.2" y="17.5" width="3" height="2.600" rx="0.400" fill="#ffffff"/><rect x="23.3" y="17.5" width="3" height="2.600" rx="0.400" fill="#ffffff"/><rect x="7.6" y="22.2" width="3" height="2.600" rx="0.400" fill="#ffffff"/><rect x="13" y="22.2" width="3" height="2.600" rx="0.400" fill="#ffffff"/><rect x="18.2" y="22.2" width="3" height="2.600" rx="0.400" fill="#ffffff"/><circle cx="26.600" cy="25.400" r="6.300" fill="#f9cf14" stroke="#ecbf0a" stroke-width="0.8"/><text x="26.600" y="29.200" text-anchor="middle" font-family="Liberation Sans, sans-serif" font-size="10" font-weight="700" fill="#111">v</text></svg>
<svg style="left:594px;top:58px" width="34" height="32" viewBox="0 0 34 32"><rect x="5.500" y="1.500" width="22" height="29" rx="1.800" fill="url(#gCalc)" stroke="#4a8ccc" stroke-width="1.100"/><rect x="6.600" y="2.600" width="19.800" height="26.800" rx="1.200" fill="none" stroke="#f2f8fe" stroke-width="0.800"/><rect x="7.800" y="3.700" width="17.400" height="10.400" rx="0.800" fill="url(#gDisp)" stroke="#5f96cf" stroke-width="0.800"/><rect x="8.200" y="4.100" width="16.600" height="2" fill="#f6a21e"/><rect x="8.200" y="5.300" width="16.600" height="0.800" fill="#fbc566"/><rect x="19.600" y="7.600" width="3.200" height="4.900" rx="0.900" fill="none" stroke="#3c4d80" stroke-width="1"/><path d="M19.900 10H22.500" stroke="#3c4d80" stroke-width="0.500" stroke-opacity="0.600"/><rect x="8.2" y="17.1" width="1.900" height="1.800" fill="#4d8fb5"/><rect x="11.2" y="17.1" width="1.900" height="1.800" fill="#4d8fb5"/><rect x="14.2" y="17.1" width="1.900" height="1.800" fill="#4d8fb5"/><rect x="17.3" y="17.1" width="1.900" height="1.800" fill="#4d8fb5"/><rect x="20.3" y="17.1" width="1.900" height="1.800" fill="#4d8fb5"/><rect x="23.3" y="17.1" width="1.900" height="1.800" fill="#4d8fb5"/><rect x="8.2" y="20.1" width="1.900" height="1.800" fill="#fff3e4"/><rect x="11.2" y="20.1" width="1.900" height="1.800" fill="#fff3e4"/><rect x="14.2" y="20.1" width="1.900" height="1.800" fill="#fff3e4"/><rect x="17.3" y="20.1" width="1.900" height="1.800" fill="#4d8fb5"/><rect x="20.3" y="20.1" width="1.900" height="1.800" fill="#4d8fb5"/><rect x="23.3" y="20.1" width="1.900" height="1.800" fill="#4d8fb5"/><rect x="8.2" y="23.1" width="1.900" height="1.800" fill="#fff3e4"/><rect x="11.2" y="23.1" width="1.900" height="1.800" fill="#fff3e4"/><rect x="14.2" y="23.1" width="1.900" height="1.800" fill="#fff3e4"/><rect x="17.3" y="23.1" width="1.900" height="1.800" fill="#4d8fb5"/><rect x="20.3" y="23.1" width="1.900" height="1.800" fill="#4d8fb5"/><rect x="8.2" y="26.1" width="1.900" height="1.800" fill="#fff3e4"/><rect x="11.2" y="26.1" width="1.900" height="1.800" fill="#fff3e4"/><rect x="14.2" y="26.1" width="1.900" height="1.800" fill="#fff3e4"/><rect x="17.3" y="26.1" width="1.900" height="1.800" fill="#4d8fb5"/><rect x="20.3" y="26.1" width="1.900" height="1.800" fill="#4d8fb5"/><rect x="23.100" y="23" width="2.100" height="5" fill="url(#gOr)" stroke="#e08a10" stroke-width="0.300"/></svg>
<svg style="left:676px;top:58px" width="34" height="32" viewBox="0 0 34 32"><rect x="5.500" y="1.500" width="22" height="29" rx="1.800" fill="url(#gCalc)" stroke="#4a8ccc" stroke-width="1.100"/><rect x="6.600" y="2.600" width="19.800" height="26.800" rx="1.200" fill="none" stroke="#f2f8fe" stroke-width="0.800"/><rect x="7.800" y="3.700" width="17.400" height="10.400" rx="0.800" fill="url(#gDisp)" stroke="#5f96cf" stroke-width="0.800"/><rect x="8.200" y="4.100" width="16.600" height="2" fill="#f6a21e"/><rect x="8.200" y="5.300" width="16.600" height="0.800" fill="#fbc566"/><rect x="19.600" y="7.600" width="3.200" height="4.900" rx="0.900" fill="none" stroke="#3c4d80" stroke-width="1"/><path d="M19.900 10H22.500" stroke="#3c4d80" stroke-width="0.500" stroke-opacity="0.600"/><rect x="8.2" y="17.1" width="1.900" height="1.800" fill="#4d8fb5"/><rect x="11.2" y="17.1" width="1.900" height="1.800" fill="#4d8fb5"/><rect x="14.2" y="17.1" width="1.900" height="1.800" fill="#4d8fb5"/><rect x="17.3" y="17.1" width="1.900" height="1.800" fill="#4d8fb5"/><rect x="20.3" y="17.1" width="1.900" height="1.800" fill="#4d8fb5"/><rect x="23.3" y="17.1" width="1.900" height="1.800" fill="#4d8fb5"/><rect x="8.2" y="20.1" width="1.900" height="1.800" fill="#fff3e4"/><rect x="11.2" y="20.1" width="1.900" height="1.800" fill="#fff3e4"/><rect x="14.2" y="20.1" width="1.900" height="1.800" fill="#fff3e4"/><rect x="17.3" y="20.1" width="1.900" height="1.800" fill="#4d8fb5"/><rect x="20.3" y="20.1" width="1.900" height="1.800" fill="#4d8fb5"/><rect x="23.3" y="20.1" width="1.900" height="1.800" fill="#4d8fb5"/><rect x="8.2" y="23.1" width="1.900" height="1.800" fill="#fff3e4"/><rect x="11.2" y="23.1" width="1.900" height="1.800" fill="#fff3e4"/><rect x="14.2" y="23.1" width="1.900" height="1.800" fill="#fff3e4"/><rect x="17.3" y="23.1" width="1.900" height="1.800" fill="#4d8fb5"/><rect x="20.3" y="23.1" width="1.900" height="1.800" fill="#4d8fb5"/><rect x="8.2" y="26.1" width="1.900" height="1.800" fill="#fff3e4"/><rect x="11.2" y="26.1" width="1.900" height="1.800" fill="#fff3e4"/><rect x="14.2" y="26.1" width="1.900" height="1.800" fill="#fff3e4"/><rect x="17.3" y="26.1" width="1.900" height="1.800" fill="#4d8fb5"/><rect x="20.3" y="26.1" width="1.900" height="1.800" fill="#4d8fb5"/><rect x="23.100" y="23" width="2.100" height="5" fill="url(#gOr)" stroke="#e08a10" stroke-width="0.300"/><g transform="translate(15.6,14.6) scale(1.03)"><ellipse cx="8" cy="15.600" rx="7.600" ry="1" fill="#000" fill-opacity="0.180"/><path d="M0.500 15.400c0-3.600 2-5 4.600-5.600L8 9.400l2.900.4c2.600.6 4.600 2 4.600 5.600Z" fill="url(#gSuit)"/><path d="M5.600 9.600L8 12.800 10.400 9.600 8 8.800Z" fill="#ffffff"/><path d="M7.500 10.600h1l.6 4.600H6.900Z" fill="#d81e28"/><ellipse cx="8" cy="5.400" rx="3.300" ry="4" fill="url(#gFace)"/><path d="M4.500 5.200C4.200 2 6 0.600 8 0.600s3.800 1.400 3.500 4.600c-.4-1.600-1.200-2.200-1.800-2.400-1 .6-2.600.6-3.800.2-.8.400-1.200 1.200-1.400 2.200Z" fill="#9a4a16"/></g></svg>
<svg style="left:754px;top:58px" width="34" height="33" viewBox="0 0 34 33"><rect x="5.500" y="2.500" width="24" height="27" fill="url(#gPage)" stroke="#a3b2c8" stroke-width="0.800"/><path d="M29.600 3V29.600H6" stroke="#6c7f9c" stroke-width="0.900" fill="none"/><path d="M3.500 5.200h2.800M3.500 9.100h2.800M3.500 13h2.800M3.500 16.900h2.800M3.500 20.800h2.800M3.500 24.700h2.800M3.500 28.200h2.800" stroke="#6a7078" stroke-width="1.100"/><path d="M3.300 4.300h2.400M3.300 8.200h2.400M3.300 12.100h2.400M3.300 16h2.400M3.300 19.900h2.400M3.300 23.800h2.400M3.300 27.300h2.400" stroke="#ffffff" stroke-width="0.800"/><path d="M11.600 11.400L13.800 6.200H26V11.400Z" fill="url(#gGreen)" stroke="#4f9a4c" stroke-width="0.8"/><path d="M8.5 14.5h4.5M8.5 16.5h4.5M8.5 18.5h4.5M8.5 20.5h4.5M8.5 22.5h4.5M8.5 24.5h4.5M8.5 26.5h4.5M14.5 14.5h3" stroke="#8fa6c6" stroke-width="0.9"/><text x="3.800" y="13.400" font-family="Liberation Sans, sans-serif" font-size="13.200" font-weight="400" fill="#000" stroke="#000" stroke-width="0.450">V</text><path d="M30.58 22.20Q32.95 24.58 29.78 25.71Q30.88 28.88 27.54 28.52Q27.15 31.85 24.30 30.08Q22.50 32.92 20.70 30.08Q17.85 31.85 17.46 28.52Q14.12 28.88 15.22 25.71Q12.05 24.58 14.42 22.20Q12.05 19.82 15.22 18.69Q14.12 15.52 17.46 15.88Q17.85 12.55 20.70 14.32Q22.50 11.48 24.30 14.32Q27.15 12.55 27.54 15.88Q30.88 15.52 29.78 18.69Q32.95 19.82 30.58 22.20Z" fill="#f5a623" stroke="#e8921a" stroke-width="0.500"/><circle cx="22.5" cy="22.2" r="6.96" fill="url(#gSeal)" stroke="#f0b428" stroke-width="0.600"/><path d="M18.90 22.50L20.90 24.70L26.30 19.80" fill="none" stroke="#e27a12" stroke-width="1.900" stroke-linecap="round" stroke-linejoin="round"/></svg>
<svg style="left:839px;top:58px" width="34" height="33" viewBox="0 0 34 33"><rect x="5.500" y="2.500" width="24" height="27" fill="url(#gPage)" stroke="#a3b2c8" stroke-width="0.800"/><path d="M29.600 3V29.600H6" stroke="#6c7f9c" stroke-width="0.900" fill="none"/><path d="M3.500 5.200h2.800M3.500 9.100h2.800M3.500 13h2.800M3.500 16.900h2.800M3.500 20.800h2.800M3.500 24.700h2.800M3.500 28.200h2.800" stroke="#6a7078" stroke-width="1.100"/><path d="M3.300 4.300h2.400M3.300 8.200h2.400M3.300 12.100h2.400M3.300 16h2.400M3.300 19.900h2.400M3.300 23.800h2.400M3.300 27.300h2.400" stroke="#ffffff" stroke-width="0.800"/><path d="M11.600 11.400L13.800 6.200H26V11.400Z" fill="url(#gGreen)" stroke="#4f9a4c" stroke-width="0.8"/><path d="M8.5 14.5h4.5M8.5 16.5h4.5M8.5 18.5h4.5M8.5 20.5h4.5M8.5 22.5h4.5M8.5 24.5h4.5M8.5 26.5h4.5M14.5 14.5h3" stroke="#8fa6c6" stroke-width="0.9"/><text x="3.800" y="13.400" font-family="Liberation Sans, sans-serif" font-size="13.200" font-weight="400" fill="#000" stroke="#000" stroke-width="0.450">V</text><path d="M30.58 22.20Q32.95 24.58 29.78 25.71Q30.88 28.88 27.54 28.52Q27.15 31.85 24.30 30.08Q22.50 32.92 20.70 30.08Q17.85 31.85 17.46 28.52Q14.12 28.88 15.22 25.71Q12.05 24.58 14.42 22.20Q12.05 19.82 15.22 18.69Q14.12 15.52 17.46 15.88Q17.85 12.55 20.70 14.32Q22.50 11.48 24.30 14.32Q27.15 12.55 27.54 15.88Q30.88 15.52 29.78 18.69Q32.95 19.82 30.58 22.20Z" fill="#f5a623" stroke="#e8921a" stroke-width="0.500"/><circle cx="22.5" cy="22.2" r="6.96" fill="url(#gSeal)" stroke="#f0b428" stroke-width="0.600"/><path d="M18.90 22.50L20.90 24.70L26.30 19.80" fill="none" stroke="#e27a12" stroke-width="1.900" stroke-linecap="round" stroke-linejoin="round"/></svg>
<svg style="left:909px;top:60px" width="16" height="16" viewBox="0 0 16 16"><path d="M1.500 0.800H6.200L15.200 13H10.500Z" fill="#1f5fb4"/><path d="M1 10C1.500 7.800 2.600 5.900 4 4.600" stroke="#d8202a" stroke-width="1.100" fill="none"/><path d="M2 13.200C7 13.800 12.500 10 14.600 4.200" stroke="#f5e21a" stroke-width="1.200" fill="none"/></svg>
<svg style="left:908px;top:81px" width="17" height="16" viewBox="0 0 17 16"><ellipse cx="8" cy="14.600" rx="7" ry="0.900" fill="#000" fill-opacity="0.180"/><path d="M1 8.500C1 5 4 3 7.500 3c1.200 0 2.300.2 3.200.6L12.800 2.200 12.600 4.800c1 .8 1.700 1.700 2 2.600l1.200.6v2.400l-1.400.5c-.5.900-1.200 1.600-2 2.100V14.400H10.200V13.400c-1 .2-2.200.2-3.200 0v1H4.800V12.600C2.400 11.800 1 10.400 1 8.500Z" fill="url(#gPig)" stroke="#b357a8" stroke-width="0.800"/><path d="M3.600 6.200c1-1.400 2.600-2 4.200-2" stroke="#ffffff" stroke-width="1" fill="none" stroke-opacity="0.800"/><circle cx="12.200" cy="7" r="0.600" fill="#7a2a72"/></svg>
<svg style="left:912px;top:104px" width="12.5" height="12.5" viewBox="0 0 16 16"><path d="M1.800 14.200L10.600 5.400" stroke="#e8921a" stroke-width="2.300" stroke-linecap="round"/><path d="M2 13.600L10.200 5.400" stroke="#fbc64a" stroke-width="0.800" stroke-linecap="round"/><path d="M11.600 0.600l.9 2.500 2.700.1-2.100 1.700.7 2.600-2.200-1.500-2.200 1.500.7-2.600-2.100-1.700 2.700-.1Z" fill="#f7a81c" stroke="#e07a10" stroke-width="0.400"/><path d="M3 5.200l2 2M5 5.200l-2 2M10.400 11l1.800 1.800M12.200 11l-1.800 1.800" stroke="#ee9a1c" stroke-width="1.300"/></svg>
<svg style="left:1039.5px;top:60px" width="12.5" height="12.5" viewBox="0 0 16 16"><path d="M1.800 14.200L10.600 5.400" stroke="#e8921a" stroke-width="2.300" stroke-linecap="round"/><path d="M2 13.600L10.200 5.400" stroke="#fbc64a" stroke-width="0.800" stroke-linecap="round"/><path d="M11.600 0.600l.9 2.500 2.700.1-2.100 1.700.7 2.600-2.200-1.500-2.200 1.500.7-2.600-2.100-1.700 2.700-.1Z" fill="#f7a81c" stroke="#e07a10" stroke-width="0.400"/><path d="M3 5.200l2 2M5 5.200l-2 2M10.400 11l1.800 1.800M12.200 11l-1.800 1.800" stroke="#ee9a1c" stroke-width="1.300"/></svg>
<svg style="left:1036px;top:81px" width="17" height="17" viewBox="0 0 17 17"><path d="M0.500 3.500H5V1.500H10V3.500H11.500V15.500H0.500Z" fill="#e3c272" stroke="#b8923c" stroke-width="0.800"/><path d="M2 5.500h1.500M2 8h1.500M2 10.500h1.500M2 13h1.500M6 3.500h1.500M8.500 3.500H10" stroke="#fff2c4" stroke-width="1.100"/><path d="M14.200 6.200L10.600 3.400V5H6.200a1.200 1.200 0 0 0 0 2.400h4.400V9Z" fill="url(#gArrG)" stroke="#5fa81a" stroke-width="0.400"/><path d="M1.800 10.600L5.400 7.800V9.400H10a1.200 1.200 0 0 1 0 2.400H5.400v1.600Z" fill="url(#gArrO)" stroke="#d8780c" stroke-width="0.400"/><g transform="translate(7.6,8.6) scale(0.53)"><ellipse cx="8" cy="15.600" rx="7.600" ry="1" fill="#000" fill-opacity="0.180"/><path d="M0.500 15.400c0-3.600 2-5 4.600-5.600L8 9.400l2.900.4c2.600.6 4.600 2 4.600 5.600Z" fill="url(#gSuit)"/><path d="M5.600 9.600L8 12.800 10.400 9.600 8 8.800Z" fill="#ffffff"/><path d="M7.500 10.600h1l.6 4.600H6.900Z" fill="#d81e28"/><ellipse cx="8" cy="5.400" rx="3.300" ry="4" fill="url(#gFace)"/><path d="M4.500 5.200C4.200 2 6 0.600 8 0.600s3.800 1.400 3.500 4.600c-.4-1.600-1.200-2.200-1.800-2.400-1 .6-2.600.6-3.800.2-.8.400-1.200 1.200-1.400 2.200Z" fill="#9a4a16"/></g></svg>
<svg style="left:1036px;top:103px" width="16" height="16" viewBox="0 0 16 16"><rect x="0.800" y="0.800" width="14.400" height="13.800" rx="1" fill="url(#gSafe)" stroke="#a4acb6" stroke-width="1"/><rect x="2.600" y="2.600" width="10.800" height="10.200" fill="#eef1f4" stroke="#c3cad2" stroke-width="0.700"/><path d="M1.500 14.800h2.500v1H1.500ZM12 14.800h2.500v1H12Z" fill="#8a929c"/><circle cx="8.400" cy="9.800" r="1.500" fill="#5a6270"/><path d="M4.800 5l3 1.600M4.800 6.800l2.600-.8" stroke="#8a929c" stroke-width="0.700"/><circle cx="4.600" cy="5" r="0.700" fill="none" stroke="#8a929c" stroke-width="0.500"/></svg>
<svg style="left:1229px;top:58px" width="34" height="32" viewBox="0 0 34 32"><path d="M2.300 12.300a1.500 1.500 0 0 1 1.500-1.500h1.200l1.200-3.300h9.400l1.200 3.300h10.400a1.500 1.500 0 0 1 1.500 1.500V30.600H2.300Z" fill="url(#gFoldB)" stroke="#eaa51c" stroke-width="0.800"/><path d="M3.400 12.400a.6.6 0 0 1 .6-.6h2l1.200-3.300h7.600" stroke="#fde79a" stroke-width="0.800" fill="none"/><path d="M3.100 30.600L8 15.300H33.400L28.500 30.600Z" fill="url(#gFold)" stroke="#eda81e" stroke-width="0.800"/><path d="M4.400 29.600L8.800 16.300H32" stroke="#fff7d0" stroke-width="1" fill="none"/><path d="M16.800 0.900L29.800 5.600 27.500 7.300C30 13 27.600 21 21.300 25 24.400 19.600 24.400 13.600 22 10.700L17.600 9.900Z" fill="url(#gGrn2)" stroke="#2c8a10" stroke-width="0.600"/><path d="M18 2.400L27.600 5.800" stroke="#a6ea5a" stroke-width="0.800" fill="none"/></svg>
<svg style="left:21px;top:156px" width="17" height="17" viewBox="0 0 17 17"><rect x="4.300" y="2.300" width="8.200" height="12" fill="#3b4250" stroke="#b98a52" stroke-width="1"/><path d="M12.300 1.800L16 0.600V15.800L12.300 14.600Z" fill="url(#gDoor)" stroke="#a8702c" stroke-width="0.5"/><rect x="13.700" y="7.400" width="1" height="1.800" fill="#f7c21a"/><path d="M1.200 14.600H12" stroke="#4a4a4a" stroke-width="1"/><path d="M0.400 8.400L4.400 4.800V6.800H7V10H4.400V12Z" fill="url(#gArrO)"/><path d="M11.400 8.400L7.400 4.800V6.800H5.600V10H7.400V12Z" fill="url(#gArrG)"/></svg>
<svg style="left:22px;top:308px" width="17" height="16" viewBox="0 0 17 16"><g transform="translate(7.4,1.2) scale(0.62,0.86)"><ellipse cx="8" cy="15.600" rx="7.600" ry="1" fill="#000" fill-opacity="0.180"/><path d="M0.500 15.400c0-3.600 2-5 4.600-5.600L8 9.400l2.900.4c2.600.6 4.600 2 4.600 5.600Z" fill="url(#gSuit)"/><path d="M5.600 9.600L8 12.800 10.400 9.600 8 8.800Z" fill="#ffffff"/><path d="M7.500 10.600h1l.6 4.600H6.900Z" fill="#d81e28"/><ellipse cx="8" cy="5.400" rx="3.300" ry="4" fill="url(#gFace)"/><path d="M4.500 5.200C4.200 2 6 0.600 8 0.600s3.800 1.400 3.500 4.600c-.4-1.600-1.200-2.200-1.800-2.400-1 .6-2.600.6-3.800.2-.8.400-1.200 1.200-1.400 2.200Z" fill="#9a4a16"/></g><ellipse cx="6" cy="14.800" rx="5.600" ry="0.800" fill="#000" fill-opacity="0.150"/><path d="M0.400 14.600c0-3.200 1.400-4.600 3.200-5l2-.2 2.600.6c1.800.6 3 1.800 3.200 4.600Z" fill="url(#gBlueS)"/><ellipse cx="5" cy="6.400" rx="2.500" ry="3.100" fill="#f3c6a2"/><path d="M4 9l1 1.400 1.300-1.400Z" fill="#f1a98a"/><path d="M2 5.200C1.800 2.400 3.200 0.800 5 0.800s3.200 1.200 3.300 3.400L9.400 5 8.200 5.400H2Z" fill="#2a86da"/><path d="M3.400 2.400l1.800.8" stroke="#bfe0fa" stroke-width="0.700"/><path d="M9.600 12.400l1.400 1.200" stroke="#d81e28" stroke-width="1"/></svg>
<svg style="left:24px;top:423px" width="12" height="17" viewBox="0 0 12 17"><path d="M0.600 2.600V13.400C0.600 14.800 3 16 6 16s5.400-1.200 5.400-2.600V2.600Z" fill="url(#gGoldH)" stroke="#a8873a" stroke-width="0.900"/><ellipse cx="6" cy="2.600" rx="5.400" ry="2.100" fill="#fdf1b4" stroke="#b89a48" stroke-width="0.800"/></svg>
<svg style="left:1238px;top:14px" width="11" height="5" viewBox="0 0 11 5"><rect x="0.500" y="0.500" width="10" height="4" rx="1.400" fill="#fafbfc" stroke="#4a4f58"/></svg>
<svg style="left:1270px;top:10px" width="11" height="9" viewBox="0 0 11 9"><rect x="0.500" y="0.500" width="10" height="8" rx="1.300" fill="#fafbfc" stroke="#4a4f58"/><rect x="3.500" y="3.500" width="4" height="2" rx="0.300" fill="#e3e6ea" stroke="#4a4f58"/></svg>
<svg style="left:1300.400px;top:9.500px" width="11.800" height="10" viewBox="0 0 12 11" preserveAspectRatio="none"><path d="M1.200 0.900H3.400L6 3.500 8.600 0.900H10.800Q11.700 1.200 11 2L7.600 5.400 11 8.800Q11.700 9.600 10.800 9.900H8.600L6 7.300 3.400 9.900H1.200Q0.300 9.600 1 8.800L4.400 5.400 1 2Q0.300 1.200 1.200 0.900Z" fill="#fafbfc" stroke="#3e434b" stroke-width="1.200" stroke-linejoin="round"/></svg>
<svg style="left:1296px;top:36px" width="10" height="8" viewBox="0 0 10 8"><path d="M4.800 0.600L9.300 4.900 7.600 7.300 4.800 4.500 2 7.300 0.400 4.900Z" fill="#fafbfc" stroke="#4a4f58" stroke-width="0.950" stroke-linejoin="round"/></svg>
<span style="position:absolute;top:36px;white-space:pre;font-size:11px;line-height:13px;color:#1e2a55;letter-spacing:-0.243px;left:20px;">Principal</span>
<span style="position:absolute;top:9px;white-space:pre;font-size:11px;line-height:13px;color:#2a2a3a;letter-spacing:-0.149px;left:585px;">Vicente Mora Perez - Arrendador</span>
<span style="position:absolute;top:95px;white-space:pre;font-size:11px;line-height:13px;color:#1e1e3a;letter-spacing:-0.15px;transform:scaleX(0.9667);transform-origin:50% 0;left:-113px;width:300px;text-align:center;">Guardar</span>
<span style="position:absolute;top:108px;white-space:pre;font-size:11px;line-height:13px;color:#1e1e3a;letter-spacing:0.090px;left:-113px;width:300px;text-align:center;">y cerrar</span>
<span style="position:absolute;top:68px;white-space:pre;font-size:11px;line-height:13px;color:#1e1e3a;letter-spacing:-0.15px;transform:scaleX(0.9342);transform-origin:0 0;left:97px;">Eliminar</span>
<span style="position:absolute;top:98px;white-space:pre;font-size:11px;line-height:13px;color:#1e1e3a;letter-spacing:-0.037px;left:97.5px;">Informes</span>
<span style="position:absolute;top:95px;white-space:pre;font-size:11px;line-height:13px;color:#1e1e3a;letter-spacing:-0.161px;left:57.5px;width:300px;text-align:center;">Incidencias y</span>
<span style="position:absolute;top:108px;white-space:pre;font-size:11px;line-height:13px;color:#1e1e3a;letter-spacing:-0.154px;left:57.5px;width:300px;text-align:center;">notificaciones</span>
<span style="position:absolute;top:95px;white-space:pre;font-size:11px;line-height:13px;color:#1e1e3a;letter-spacing:-0.238px;left:131.3px;width:300px;text-align:center;">Revisiones y</span>
<span style="position:absolute;top:108px;white-space:pre;font-size:11px;line-height:13px;color:#1e1e3a;letter-spacing:-0.087px;left:131.3px;width:300px;text-align:center;">certificados</span>
<span style="position:absolute;top:95px;white-space:pre;font-size:11px;line-height:13px;color:#1e1e3a;letter-spacing:-0.053px;left:188px;width:300px;text-align:center;">Vista</span>
<span style="position:absolute;top:108px;white-space:pre;font-size:11px;line-height:13px;color:#1e1e3a;letter-spacing:0.005px;left:188px;width:300px;text-align:center;">previa</span>
<span style="position:absolute;top:95px;white-space:pre;font-size:11px;line-height:13px;color:#1e1e3a;letter-spacing:-0.215px;left:234px;width:300px;text-align:center;">Imprimir</span>
<span style="position:absolute;top:95px;white-space:pre;font-size:11px;line-height:13px;color:#1e1e3a;letter-spacing:-0.15px;transform:scaleX(0.9561);transform-origin:50% 0;left:292px;width:300px;text-align:center;">Recibos</span>
<span style="position:absolute;top:95px;white-space:pre;font-size:11px;line-height:13px;color:#1e1e3a;letter-spacing:-0.100px;left:342px;width:300px;text-align:center;">Facturas</span>
<span style="position:absolute;top:95px;white-space:pre;font-size:11px;line-height:13px;color:#1e1e3a;letter-spacing:-0.15px;transform:scaleX(0.9444);transform-origin:50% 0;left:394px;width:300px;text-align:center;">Nóminas</span>
<span style="position:absolute;top:95px;white-space:pre;font-size:11px;line-height:13px;color:#1e1e3a;letter-spacing:-0.213px;left:461px;width:300px;text-align:center;">Cobros/ Pagos</span>
<span style="position:absolute;top:108px;white-space:pre;font-size:11px;line-height:13px;color:#1e1e3a;letter-spacing:-0.112px;left:461px;width:300px;text-align:center;">del arrendador</span>
<span style="position:absolute;top:95px;white-space:pre;font-size:11px;line-height:13px;color:#1e1e3a;letter-spacing:-0.213px;left:542px;width:300px;text-align:center;">Cobros/ Pagos</span>
<span style="position:absolute;top:108px;white-space:pre;font-size:11px;line-height:13px;color:#1e1e3a;letter-spacing:-0.243px;left:542px;width:300px;text-align:center;">de inquilinos</span>
<span style="position:absolute;top:95px;white-space:pre;font-size:11px;line-height:13px;color:#1e1e3a;letter-spacing:-0.15px;transform:scaleX(0.9643);transform-origin:50% 0;left:620px;width:300px;text-align:center;">Liquidaciones</span>
<span style="position:absolute;top:95px;white-space:pre;font-size:11px;line-height:13px;color:#1e1e3a;letter-spacing:-0.15px;transform:scaleX(0.9643);transform-origin:50% 0;left:705px;width:300px;text-align:center;">Liquidaciones</span>
<span style="position:absolute;top:108px;white-space:pre;font-size:11px;line-height:13px;color:#1e1e3a;letter-spacing:-0.116px;left:705px;width:300px;text-align:center;">pagos pendientes</span>
<span style="position:absolute;top:95px;white-space:pre;font-size:11px;line-height:13px;color:#1e1e3a;letter-spacing:-0.195px;left:1095px;width:300px;text-align:center;">Cerrar</span>
<span style="position:absolute;top:126px;white-space:pre;font-size:11px;line-height:13px;color:#6f7b97;letter-spacing:-0.15px;transform:scaleX(0.9716);transform-origin:50% 0;left:542px;width:300px;text-align:center;">Opciones</span>
<span style="position:absolute;top:61px;white-space:pre;font-size:11px;line-height:13px;color:#1e1e3a;letter-spacing:-0.083px;left:929.5px;">Impuestos</span>
<span style="position:absolute;top:83px;white-space:pre;font-size:11px;line-height:13px;color:#1e1e3a;letter-spacing:-0.176px;left:929.5px;">Cobros anticipados</span>
<span style="position:absolute;top:105px;white-space:pre;font-size:11px;line-height:13px;color:#1e1e3a;letter-spacing:-0.123px;left:929.5px;">Incrementos de IPC</span>
<span style="position:absolute;top:61px;white-space:pre;font-size:11px;line-height:13px;color:#1e1e3a;letter-spacing:-0.140px;left:1056.6px;">Otros incrementos</span>
<span style="position:absolute;top:83px;white-space:pre;font-size:11px;line-height:13px;color:#1e1e3a;letter-spacing:-0.167px;left:1056.6px;">Traspaso de cobros anticipados</span>
<span style="position:absolute;top:105px;white-space:pre;font-size:11px;line-height:13px;color:#1e1e3a;letter-spacing:-0.255px;left:1056.6px;">Fianzas de alquiler</span>
<span style="position:absolute;top:153px;white-space:pre;font-size:11.5px;line-height:13px;color:#2b2b33;letter-spacing:0.141px;font-weight:700;left:219px;">Contratos de alquiler</span>
<span style="position:absolute;top:159px;white-space:pre;font-size:11.5px;line-height:13px;color:#2b2b33;letter-spacing:0.237px;font-weight:700;left:42px;">Arrendador</span>
<span style="position:absolute;top:310px;white-space:pre;font-size:11.5px;line-height:13px;color:#2b2b33;letter-spacing:0.102px;font-weight:700;left:42px;">Contactos e industriales</span>
<span style="position:absolute;top:425px;white-space:pre;font-size:11.5px;line-height:13px;color:#2b2b33;letter-spacing:0.026px;font-weight:700;left:42px;">Adicional</span>
<span style="position:absolute;top:186px;white-space:pre;font-size:11px;line-height:13px;color:#000000;letter-spacing:-0.167px;left:38.5px;">Datos generales</span>
<span style="position:absolute;top:204px;white-space:pre;font-size:11px;line-height:13px;color:#000000;letter-spacing:-0.226px;left:38.5px;">Propiedades en alquiler</span>
<span style="position:absolute;top:222px;white-space:pre;font-size:11px;line-height:13px;color:#34384c;letter-spacing:-0.266px;left:38.5px;">Forma pago liquidación</span>
<span style="position:absolute;top:240px;white-space:pre;font-size:11px;line-height:13px;color:#000000;letter-spacing:-0.167px;left:38.5px;">Estructura de liquidación</span>
<span style="position:absolute;top:258px;white-space:pre;font-size:11px;line-height:13px;color:#34384c;letter-spacing:-0.110px;left:38.5px;">Contratos de alquiler</span>
<span style="position:absolute;top:276px;white-space:pre;font-size:11px;line-height:13px;color:#34384c;letter-spacing:-0.169px;left:38.5px;">Cuenta bancaria</span>
<span style="position:absolute;top:337px;white-space:pre;font-size:11px;line-height:13px;color:#34384c;letter-spacing:-0.15px;transform:scaleX(0.9461);transform-origin:0 0;left:38.5px;">Empleados</span>
<span style="position:absolute;top:355px;white-space:pre;font-size:11px;line-height:13px;color:#34384c;letter-spacing:-0.010px;left:38.5px;">Otros contactos</span>
<span style="position:absolute;top:373px;white-space:pre;font-size:11px;line-height:13px;color:#34384c;letter-spacing:-0.201px;left:38.5px;">Seguros y mantenimientos</span>
<span style="position:absolute;top:391px;white-space:pre;font-size:11px;line-height:13px;color:#34384c;letter-spacing:-0.039px;left:38.5px;">Industriales</span>
<span style="position:absolute;top:452px;white-space:pre;font-size:11px;line-height:13px;color:#34384c;letter-spacing:-0.15px;transform:scaleX(0.9707);transform-origin:0 0;left:38.5px;">Documentos</span>
<span style="position:absolute;top:470px;white-space:pre;font-size:11px;line-height:13px;color:#34384c;letter-spacing:-0.175px;left:38.5px;">Configuración</span>
<span style="position:absolute;top:488px;white-space:pre;font-size:11px;line-height:13px;color:#34384c;letter-spacing:-0.088px;left:38.5px;">Certificado digital</span>
<span style="position:absolute;top:506px;white-space:pre;font-size:11px;line-height:13px;color:#34384c;letter-spacing:-0.083px;left:38.5px;">Impuestos</span>
<span style="position:absolute;top:189px;white-space:pre;font-size:11.5px;line-height:13px;color:#2b2b33;letter-spacing:0.188px;font-weight:700;left:250px;">Contratos</span>
<span style="position:absolute;top:189px;white-space:pre;font-size:11.5px;line-height:13px;color:#2b2b33;letter-spacing:0.021px;font-weight:700;left:1250px;width:55px;overflow:hidden;">Datos de recibos</span>
<span style="position:absolute;top:209px;white-space:pre;font-size:11px;line-height:13px;color:#3a3d48;letter-spacing:-0.143px;left:530px;">Departamento</span>
<span style="position:absolute;top:209px;white-space:pre;font-size:11px;line-height:13px;color:#3a3d48;letter-spacing:-0.158px;left:750px;">Inquilino principal</span>
<span style="position:absolute;top:209px;white-space:pre;font-size:11px;line-height:13px;color:#3a3d48;letter-spacing:-0.032px;left:938px;">Inicio contrato</span>
<span style="position:absolute;top:209px;white-space:pre;font-size:11px;line-height:13px;color:#3a3d48;letter-spacing:-0.091px;left:1035px;">Fin contrato</span>
<span style="position:absolute;top:209px;white-space:pre;font-size:11px;line-height:13px;color:#3a3d48;letter-spacing:-0.121px;left:1132px;">Fecha baja propiedad</span>
<span style="position:absolute;top:209px;white-space:pre;font-size:11px;line-height:13px;color:#3a3d48;letter-spacing:-0.402px;left:1250px;width:55px;overflow:hidden;">Emitir recibos</span>
<span style="position:absolute;top:246px;white-space:pre;font-size:11.5px;line-height:13px;color:#2b2b33;letter-spacing:0.004px;font-weight:700;left:269px;">Dirección: Balmes, 201</span>
<span style="position:absolute;top:265px;white-space:pre;font-size:11px;line-height:13px;color:#000;letter-spacing:-0.287px;left:249px;">Balmes, 201</span>
<span style="position:absolute;top:265px;white-space:pre;font-size:11px;line-height:13px;color:#000;letter-spacing:-0.141px;left:529px;">ATICO 1</span>
<span style="position:absolute;top:265px;white-space:pre;font-size:11px;line-height:13px;color:#000;letter-spacing:-0.246px;left:749px;">Elena Fajardo Galisteo</span>
<span style="position:absolute;top:265px;white-space:pre;font-size:11px;line-height:13px;color:#000;letter-spacing:0.094px;left:938px;">01/03/2017</span>
<span style="position:absolute;top:265px;white-space:pre;font-size:11px;line-height:13px;color:#000;letter-spacing:0.094px;left:1035px;">28/02/2024</span>
<span style="position:absolute;top:286px;white-space:pre;font-size:11px;line-height:13px;color:#000;letter-spacing:-0.287px;left:249px;">Balmes, 201</span>
<span style="position:absolute;top:286px;white-space:pre;font-size:11px;line-height:13px;color:#000;letter-spacing:-0.141px;left:529px;">ATICO 2</span>
<span style="position:absolute;top:286px;white-space:pre;font-size:11px;line-height:13px;color:#000;letter-spacing:-0.282px;left:749px;">Nicolás Olivares Perelló</span>
<span style="position:absolute;top:286px;white-space:pre;font-size:11px;line-height:13px;color:#000;letter-spacing:0.094px;left:938px;">01/06/2013</span>
<span style="position:absolute;top:286px;white-space:pre;font-size:11px;line-height:13px;color:#000;letter-spacing:0.094px;left:1035px;">31/05/2023</span>
<span style="position:absolute;top:323px;white-space:pre;font-size:11.5px;line-height:13px;color:#2b2b33;letter-spacing:0.142px;font-weight:700;left:269px;">Dirección: Muntaner, 12</span>
<span style="position:absolute;top:342px;white-space:pre;font-size:11px;line-height:13px;color:#000;letter-spacing:0.148px;left:249px;">Muntaner, 12</span>
<span style="position:absolute;top:342px;white-space:pre;font-size:11px;line-height:13px;color:#000;letter-spacing:-0.15px;transform:scaleX(0.8758);transform-origin:0 0;left:529px;">ENTRESUELO</span>
<span style="position:absolute;top:342px;white-space:pre;font-size:11px;line-height:13px;color:#000;letter-spacing:-0.190px;left:749px;">Sociedad General de Autores</span>
<span style="position:absolute;top:342px;white-space:pre;font-size:11px;line-height:13px;color:#000;letter-spacing:0.094px;left:938px;">01/12/2017</span>
<span style="position:absolute;top:342px;white-space:pre;font-size:11px;line-height:13px;color:#000;letter-spacing:0.175px;left:1035px;">30/11/2027</span>
<span style="position:absolute;top:363px;white-space:pre;font-size:11px;line-height:13px;color:#000;letter-spacing:0.148px;left:249px;">Muntaner, 12</span>
<span style="position:absolute;top:363px;white-space:pre;font-size:11px;line-height:13px;color:#000;letter-spacing:-0.15px;transform:scaleX(0.9668);transform-origin:0 0;left:529px;">PRIMERO 1ª</span>
<span style="position:absolute;top:363px;white-space:pre;font-size:11px;line-height:13px;color:#000;letter-spacing:-0.15px;transform:scaleX(0.9678);transform-origin:0 0;left:749px;">Luis Enrique Gonzales Trubia</span>
<span style="position:absolute;top:363px;white-space:pre;font-size:11px;line-height:13px;color:#000;letter-spacing:0.094px;left:938px;">15/08/2016</span>
<span style="position:absolute;top:363px;white-space:pre;font-size:11px;line-height:13px;color:#000;letter-spacing:0.094px;left:1035px;">14/08/2023</span>
<div style="position:absolute;left:32px;top:255px;width:109px;height:19px;border:2px solid #f2131a;"></div>
<div style="position:absolute;left:1029px;top:197px;width:100px;height:193px;border:2px solid #ff0000;"></div>
<svg style="left:0;top:0" width="1329" height="527" viewBox="0 0 1329 527"><path d="M140.500 264.500 L208 169" stroke="#ff0000" stroke-width="2.100" fill="none"/><path d="M213.300 161.200 L209.800 172.200 L203.800 168.100Z" fill="#ff0000"/></svg>
</div></body></html>
